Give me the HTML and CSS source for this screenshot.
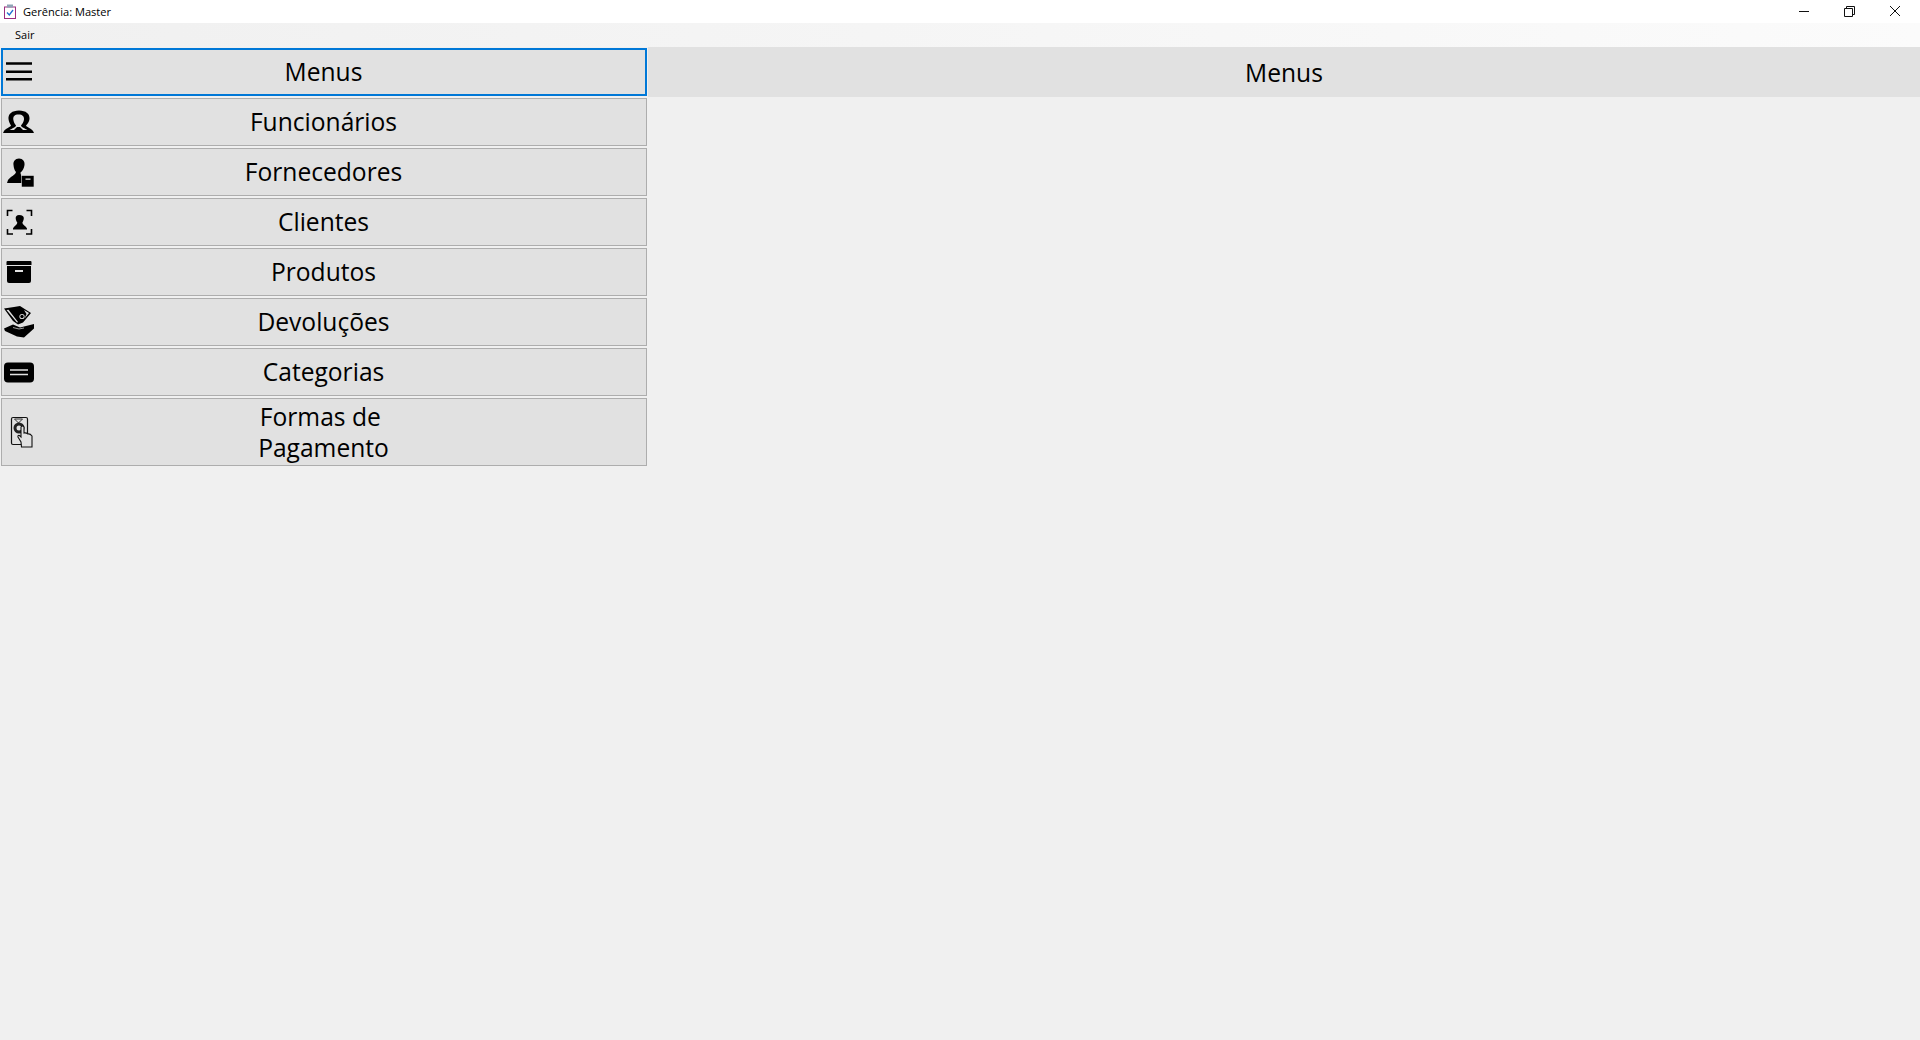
FILE: index.html
```html
<!DOCTYPE html>
<html lang="pt-BR">

<head>
    <meta charset="UTF-8">
    <meta name="viewport" content="width=device-width, initial-scale=1.0">
    <title>Gerência: Master</title>
    <link rel="stylesheet" href="styles.css">
</head>

<body>
    <div class="title-bar">
        <svg class="app-icon" viewBox="0 0 16 16">
            <rect x="2.500" y="3" width="11" height="11.500" fill="#fff" stroke="#9b2d7f" stroke-width="1" />
            <rect x="5" y="0.500" width="6" height="3" fill="#8fa3b5" />
            <path d="M5 8.500 L7.300 11 L11 6" fill="none" stroke="#1f6fd0" stroke-width="1.300" />
        </svg>
        <span class="app-title">Gerência: Master</span>
        <div class="window-buttons">
            <svg class="win-btn" viewBox="0 0 46 22">
                <path d="M19 10.500 H29" stroke="#111" fill="none" />
            </svg>
            <svg class="win-btn" viewBox="0 0 46 22">
                <path d="M18.500 7.500 H26.500 V15.500 H18.500 Z M20.500 7.500 V5.500 H28.500 V13.500 H26.500" stroke="#111" fill="none" />
            </svg>
            <svg class="win-btn" viewBox="0 0 46 22">
                <path d="M18 5 L28 15 M28 5 L18 15" stroke="#111" fill="none" />
            </svg>
        </div>
    </div>

    <div class="menu-bar">
        <span class="menu-item">Sair</span>
    </div>

    <div class="main">
        <div class="side-menu">
            <button class="menu-btn selected">
                <svg class="icon" viewBox="0 0 32 32">
                    <path d="M3 7.500 H29 M3 15.700 H29 M3 23.300 H29" stroke="#000" stroke-width="2.400" fill="none" />
                </svg>
                <span class="label">Menus</span>
            </button>
            <button class="menu-btn">
                <svg class="icon" viewBox="0 0 32 32">
                    <path d="M16 4.500 C9 4.500 5 8 5.500 13 C5.800 16 7 18 8 19.500 C7 21.500 3 22 1 25 L0 27 H31 L30 25 C28 22 24 21.500 23 19.500 C24.500 18 26.200 16 26.500 13 C27 8 23 4.500 16 4.500 Z" fill="#000" />
                    <path d="M15.500 8.500 C11.500 8.500 10 10.500 10.300 13.500 C10.600 16 11.800 18 13 19.500 C13 21 9 22.500 6.500 24 H24.500 C22 22.500 18 21 18 19.500 C19.200 18 20.700 16 21 13.500 C21.300 10.500 19.500 8.500 15.500 8.500 Z" fill="#e1e1e1" />
                    <path d="M14 21 C13 22 12 23 11 24 H20 C19 23 18 22 17 21 Z" fill="#000" />
                </svg>
                <span class="label">Funcionários</span>
            </button>
            <button class="menu-btn">
                <svg class="icon" viewBox="0 0 32 32">
                    <path d="M16 2.500 C12 2.500 10 5.500 10.500 9 C10.800 12 11.500 14.500 13 16 C12.500 19 8 20 5 24 L4 27 H19 V20 C18 19 17.500 18 17.500 16.500 C19.500 15 21 12.500 21.500 9 C22 5.500 20 2.500 16 2.500 Z" fill="#000" />
                    <rect x="18.500" y="19.500" width="12.500" height="11.500" fill="#000" stroke="#e1e1e1" stroke-width="0.600" />
                    <rect x="22.500" y="22.500" width="5" height="1.300" fill="#e1e1e1" />
                </svg>
                <span class="label">Fornecedores</span>
            </button>
            <button class="menu-btn">
                <svg class="icon" viewBox="0 0 32 32">
                    <path d="M9.500 4.500 H4.500 V10 M23.500 4.500 H28.500 V10 M4.500 23 V28 H10 M28.500 23 V28 H23" fill="none" stroke="#000" stroke-width="1.600" />
                    <path d="M16 9 C13.800 9 12.500 10.500 12.700 12.500 C12.900 14.300 13.500 15.500 14.300 16.500 C14.200 19 11 20 10 22.500 V23.500 H24 V22.500 C23 20 19.500 19 19.400 16.500 C20 15.500 20.600 14.300 20.800 12.500 C21 10.500 19.500 9 16 9 Z" fill="#000" />
                </svg>
                <span class="label">Clientes</span>
            </button>
            <button class="menu-btn">
                <svg class="icon" viewBox="0 0 32 32">
                    <path d="M4.500 5 H27.500 Q28.500 5 28.500 6 V9 H3.500 V6 Q3.500 5 4.500 5 Z" fill="#000" />
                    <path d="M4 10 H28 V25 Q28 27 26 27 H6 Q4 27 4 25 Z" fill="#000" />
                    <rect x="12" y="14" width="8" height="2" fill="#e1e1e1" />
                </svg>
                <span class="label">Produtos</span>
            </button>
            <button class="menu-btn">
                <svg class="icon" viewBox="0 0 32 32">
                    <path d="M1 2.500 L11 1 L17 0 L28 7 L20 16.500 L15 18.500 L10 15 Z" fill="#000" />
                    <path d="M3.500 4 L5.500 3.800 L15 16 L14 16.500 Z M21 4 L26 7 L21.500 12.500 L23.500 8 Z" fill="#e1e1e1" />
                    <circle cx="19" cy="10.500" r="2.600" fill="#e1e1e1" />
                    <circle cx="19" cy="10.500" r="1.700" fill="#000" />
                    <path d="M1 22.500 L10 18.500 L17 21.500 L23 20 L31 18 L31 22.500 L21 31.500 L14 30.500 L2 25 Z" fill="#000" />
                    <path d="M10 21.500 L16 23 L21 22" stroke="#e1e1e1" stroke-width="0.700" fill="none" />
                </svg>
                <span class="label">Devoluções</span>
            </button>
            <button class="menu-btn">
                <svg class="icon" viewBox="0 0 32 32">
                    <rect x="1" y="6.500" width="30" height="20" rx="4" fill="#000" />
                    <path d="M7 14 H25 M7 18.500 H25" stroke="#e1e1e1" stroke-width="1.300" fill="none" />
                </svg>
                <span class="label">Categorias</span>
            </button>
            <button class="menu-btn tall">
                <svg class="icon" viewBox="0 0 32 32">
                    <rect x="8.500" y="1.500" width="16" height="27" rx="1.500" fill="none" stroke="#111" stroke-width="1.200" />
                    <path d="M11.500 3 H19.500 L15.500 7 Z" fill="none" stroke="#333" />
                    <circle cx="16" cy="12" r="4" fill="none" stroke="#222" stroke-width="3" />
                    <path d="M18 11 V21 L16.500 19.500 Q14.500 19 15 21 L18 26 L18.500 31 H29 L29 20 Q27 17.500 25 18 Q23 16.500 21 17 V11 Q19.500 9 18 11 Z" fill="#e1e1e1" stroke="#111" stroke-width="1.100" />
                </svg>
                <span class="label two-lines">Formas de&nbsp;<br>Pagamento</span>
            </button>
        </div>
        <div class="content">
            <div class="content-header">Menus</div>
        </div>
    </div>
</body>

</html>
```

FILE: styles.css
```css
html, body {
    height: 100%;
}

body {
    font-family: "Open Sans", "Noto Sans", sans-serif;
    background-color: #f0f0f0;
    margin: 0;
    padding: 0;
    display: flex;
    flex-direction: column;
    overflow: hidden;
    color: #000;
}

.title-bar {
    height: 23px;
    background-color: #fff;
    display: flex;
    align-items: center;
    padding-left: 2px;
}

.app-icon {
    width: 16px;
    height: 16px;
    margin-right: 5px;
}

.app-title {
    font-size: 11.100px;
}

.window-buttons {
    margin-left: auto;
    display: flex;
    padding-right: 2px;
}

.win-btn {
    width: 46px;
    height: 22px;
}

.menu-bar {
    height: 24px;
    background: linear-gradient(to right, #f0f0f0, #fbfbfb);
    display: flex;
    align-items: center;
    padding-left: 15px;
}

.menu-item {
    font-size: 11px;
    margin-bottom: 1px;
}

.main {
    flex: 1;
    display: flex;
}

.side-menu {
    width: 647px;
    display: flex;
    flex-direction: column;
    gap: 2px;
    padding: 1px 0 0 1px;
    margin-right: 1px;
    box-sizing: border-box;
}

.menu-btn {
    height: 48px;
    padding: 0;
    background-color: #e1e1e1;
    border: 1px solid #adadad;
    box-sizing: border-box;
    display: grid;
    place-items: center;
    font-family: inherit;
    font-size: 24.600px;
    line-height: 31px;
    color: #000;
}

.menu-btn.selected {
    border: 2px solid #0078d7;
}

.menu-btn.tall {
    height: 68px;
}

.icon,
.label {
    grid-area: 1 / 1;
}

.icon {
    justify-self: start;
    width: 32px;
    height: 32px;
    margin-left: 1px;
}

.menu-btn.selected .icon {
    margin-left: 0;
}

.label {
    margin: 0 1px 2px 0;
}

.label.two-lines {
    margin-bottom: 1px;
}

.content {
    flex: 1;
}

.content-header {
    height: 50px;
    background-color: #e1e1e1;
    display: flex;
    align-items: center;
    justify-content: center;
    font-size: 24.600px;
}
```
